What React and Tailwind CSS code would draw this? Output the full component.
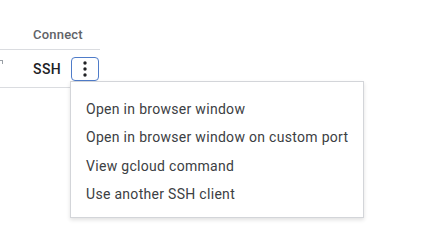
import { useState } from "react";

const items = [
  "Open in browser window",
  "Open in browser window on custom port",
  "View gcloud command",
  "Use another SSH client",
];

function DotsIcon() {
  return (
    <svg width="4" height="16" viewBox="0 0 4 16" className="fill-[#202124]">
      <circle cx="2" cy="2" r="1.7" />
      <circle cx="2" cy="8" r="1.7" />
      <circle cx="2" cy="14" r="1.7" />
    </svg>
  );
}

export default function App() {
  const [open] = useState(true);

  return (
    <div className="relative w-[439px] h-[246px] bg-white overflow-hidden font-['Roboto',sans-serif]">
      <div className="w-[100px]">
        <div className="h-[50px] flex items-end pb-[6px] pl-[33px] border-b border-[#dadce0]">
          <span className="text-[13px] leading-[16px] font-medium tracking-[0.2px] text-[#5f6368]">Connect</span>
        </div>
        <div className="h-[38px] flex items-center border-b border-[#dadce0]">
          <div className="w-[33px] self-stretch pt-[10px]">
            <span className="block w-[3px] h-[4px] border-t border-r border-[#9aa0a6]" />
          </div>
          <span className="text-[14px] leading-[18px] font-medium tracking-[0.4px] text-[#202124]">SSH</span>
          <button
            type="button"
            className="ml-[10px] w-[28px] h-[24px] flex items-center justify-center rounded-[4px] border border-[#4f7cc9] bg-white"
          >
            <DotsIcon />
          </button>
        </div>
      </div>

      {open && (
        <div className="absolute left-[70px] top-[81px] w-[294px] bg-white border border-[#d3d5d9] shadow-[0_2px_4px_rgba(0,0,0,0.12)] pt-[13px] pb-[8px]">
          {items.map((label) => (
            <div
              key={label}
              className="h-[28.5px] flex items-center pl-[15px] text-[14px] tracking-[0.3px] text-[#3c4043]"
            >
              {label}
            </div>
          ))}
        </div>
      )}
    </div>
  );
}
